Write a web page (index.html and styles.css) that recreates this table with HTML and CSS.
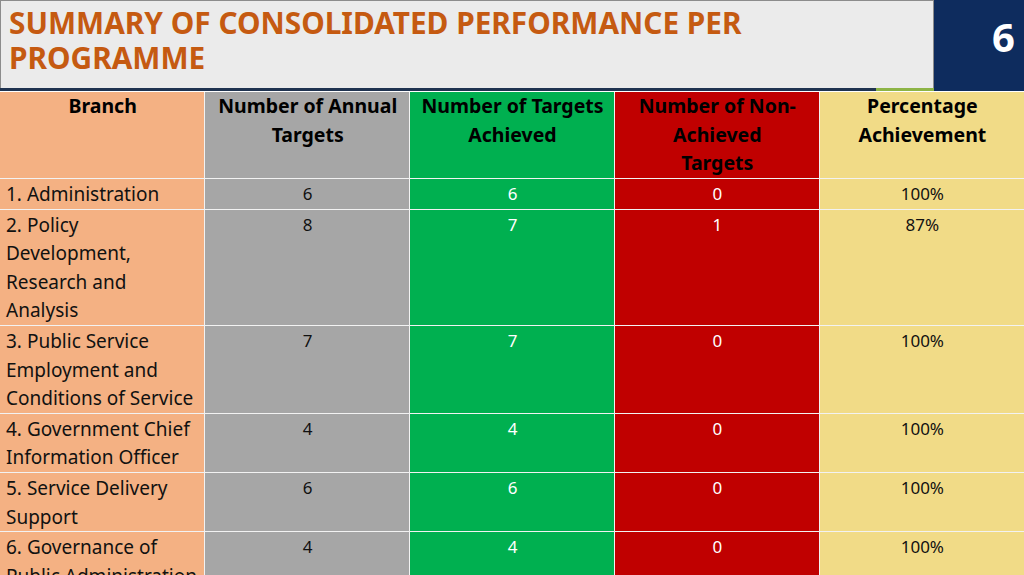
FILE: index.html
```html
<!DOCTYPE html>
<html>
<head>
<meta charset="utf-8">
<link rel="stylesheet" href="styles.css">
</head>
<body>
<div class="slide">
  <header class="head">
    <div class="head-left">
      <div class="title-box">
        <h1>SUMMARY OF CONSOLIDATED PERFORMANCE PER PROGRAMME</h1>
      </div>
      <div class="rule"><span class="rule-navy"></span><span class="rule-green"></span></div>
    </div>
    <div class="page-no">6</div>
  </header>
  <table class="perf">
    <thead>
      <tr>
        <th class="c-branch">Branch</th>
        <th class="c-annual">Number of Annual Targets</th>
        <th class="c-ach">Number of Targets Achieved</th>
        <th class="c-non">Number of Non-<br>Achieved<br>Targets</th>
        <th class="c-pct">Percentage Achievement</th>
      </tr>
    </thead>
    <tbody>
      <tr><td class="c-branch">1. Administration</td><td class="c-annual">6</td><td class="c-ach">6</td><td class="c-non">0</td><td class="c-pct">100%</td></tr>
      <tr><td class="c-branch">2. Policy Development, Research and Analysis</td><td class="c-annual">8</td><td class="c-ach">7</td><td class="c-non">1</td><td class="c-pct">87%</td></tr>
      <tr><td class="c-branch">3. Public Service Employment and Conditions of Service</td><td class="c-annual">7</td><td class="c-ach">7</td><td class="c-non">0</td><td class="c-pct">100%</td></tr>
      <tr><td class="c-branch">4. Government Chief Information Officer</td><td class="c-annual">4</td><td class="c-ach">4</td><td class="c-non">0</td><td class="c-pct">100%</td></tr>
      <tr><td class="c-branch">5. Service Delivery Support</td><td class="c-annual">6</td><td class="c-ach">6</td><td class="c-non">0</td><td class="c-pct">100%</td></tr>
      <tr><td class="c-branch">6. Governance of Public Administration</td><td class="c-annual">4</td><td class="c-ach">4</td><td class="c-non">0</td><td class="c-pct">100%</td></tr>
    </tbody>
  </table>
</div>
</body>
</html>
```

FILE: styles.css
```css
html, body {
  margin: 0;
  padding: 0;
  background: #ffffff;
}
body {
  font-family: "Noto Sans", "Open Sans", sans-serif;
  width: 1024px;
  height: 575px;
  overflow: hidden;
}
.slide {
  width: 1024px;
  height: 575px;
  overflow: hidden;
}
.head {
  display: flex;
  height: 92px;
}
.head-left {
  flex: 1;
  display: flex;
  flex-direction: column;
}
.title-box {
  height: 88px;
  background: #ebebeb;
  border: 1px solid #8c8c8c;
  border-bottom: none;
  box-sizing: border-box;
  padding: 4px 0 0 8px;
}
.title-box h1 {
  margin: 0;
  font-size: 29.8px;
  line-height: 35px;
  font-weight: 700;
  color: #c55a11;
  width: 780px;
}
.rule {
  display: flex;
  height: 4px;
  background: #ffffff;
}
.rule-navy {
  flex: 1;
  background: #1f3350;
  height: 3px;
}
.rule-green {
  width: 58px;
  background: #8db446;
  height: 3px;
}
.page-no {
  width: 90px;
  background: #0e2c5e;
  color: #ffffff;
  font-weight: 700;
  font-size: 40px;
  line-height: 1;
  text-align: right;
  padding: 17px 9px 0 0;
  box-sizing: border-box;
  height: 91px;
}
.perf {
  width: 1024px;
  table-layout: fixed;
  border-collapse: collapse;
  margin: 0;
}
.perf th, .perf td {
  border: 1.5px solid #f2f2f2;
  vertical-align: top;
  padding: 1px 5px 0 6px;
  line-height: 28.6px;
}
.perf tr > :first-child { border-left: none; }
.perf tr > :last-child { border-right: none; }
.perf thead th {
  border-top: none;
  font-size: 19.5px;
  font-weight: 700;
  text-align: center;
  color: #000000;
  height: 86px;
  padding-top: 0;
}
.perf td {
  font-size: 17px;
  text-align: center;
}
.perf td.c-branch {
  font-size: 19px;
  text-align: left;
  color: #111111;
}
.c-branch { background: #f4b183; }
.c-annual { background: #a6a6a6; color: #111111; }
.c-ach { background: #00b050; }
.c-non { background: #c00000; }
.c-pct { background: #f1db87; color: #111111; }
td.c-ach, td.c-non { color: #ffffff; }
th.c-ach, th.c-non { color: #000000; }
```
